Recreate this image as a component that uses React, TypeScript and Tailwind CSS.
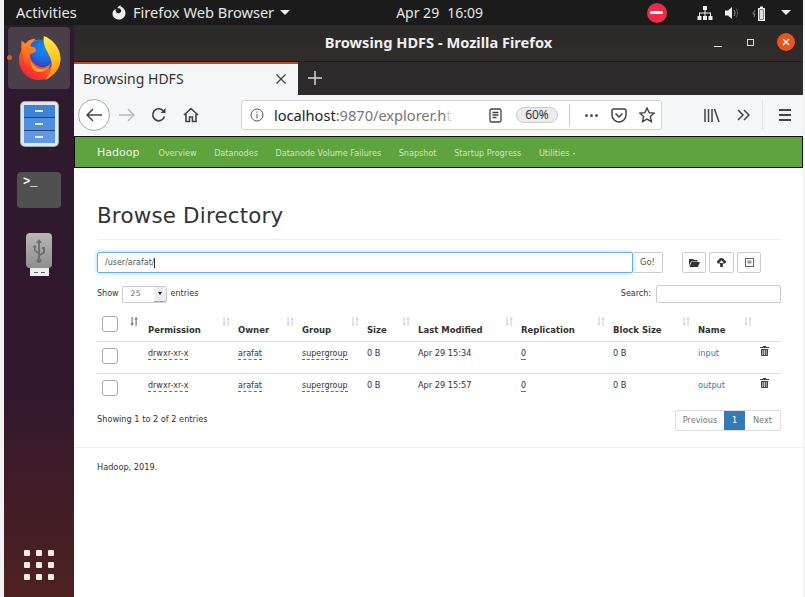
const page = "font-['DejaVu_Sans',sans-serif]";

const SortIcon = ({ active }: { active?: boolean }) => (
  <svg width="9" height="9" viewBox="0 0 9 9" className={active ? "text-[#777]" : "text-[#d4d4d4]"} fill="currentColor">
    <path d="M1.5 0h1.200v6.500H4L2.100 9 .2 6.500h1.300zM5.500 9h1.200V2.500H8L6.100 0 4.200 2.500h1.300z" />
  </svg>
);

const Checkbox = () => <div className="h-[16px] w-[16px] rounded-[3px] border border-[#aaa] bg-white" />;

const Trash = () => (
  <svg width="9" height="10" viewBox="0 0 9 10" fill="#444">
    <path d="M3 0h3l.4 1H9v1H0V1h2.600zM1 3h7v6.200c0 .5-.3.8-.8.8H1.800c-.5 0-.8-.3-.8-.8zm1.500 1v5h.7V4zm1.700 0v5h.7V4zm1.700 0v5h.6V4z" />
  </svg>
);

const Dashed = ({ children }: { children: string }) => (
  <span className="border-b border-dashed border-[#2a7fc0] pb-[1px] text-[8px] leading-none">{children}</span>
);

const colClass =
  "grid grid-cols-[46px_90px_64px_65px_51px_103px_92px_85px_62px_26px]";

const Header = ({ label, active }: { label?: string; active?: boolean }) => (
  <div className={`flex h-[30px] justify-between pl-[5px] ${active ? "pr-[4px]" : "pr-[2px]"}`}>
    {label ? <span className="self-end pb-[7px] text-[8.500px] font-bold leading-none text-[#333]">{label}</span> : <div className="mt-[5px]"><Checkbox /></div>}
    <div className="mt-[6px]">
      <SortIcon active={active} />
    </div>
  </div>
);

const Row = ({ time, name }: { time: string; name: string }) => (
  <div className={`${colClass} h-[32px] border-b border-[#ddd] text-[8.200px] text-[#333] last:border-b-0`}>
    <div className="pl-[5px] pt-[6px]"><Checkbox /></div>
    <div className="pl-[5px] pt-[5px]"><Dashed>drwxr-xr-x</Dashed></div>
    <div className="pl-[5px] pt-[5px]"><Dashed>arafat</Dashed></div>
    <div className="pl-[5px] pt-[5px]"><Dashed>supergroup</Dashed></div>
    <div className="pl-[5px] pt-[5px]">0 B</div>
    <div className="pl-[5px] pt-[5px]">Apr 29 {time}</div>
    <div className="pl-[5px] pt-[5px]"><Dashed>0</Dashed></div>
    <div className="pl-[5px] pt-[5px]">0 B</div>
    <div className="pl-[5px] pt-[5px] text-[#337ab7]">{name}</div>
    <div className="pl-[5px] pt-[4px]"><Trash /></div>
  </div>
);

const Firefox = ({ size }: { size: number }) => (
  <svg width={size} height={size} viewBox="0 0 48 48">
    <defs>
      <linearGradient id="ffa" x1="0.85" y1="0.1" x2="0.2" y2="0.95">
        <stop offset="0" stopColor="#ff9a1f" />
        <stop offset="0.55" stopColor="#ff5a1f" />
        <stop offset="1" stopColor="#f0203a" />
      </linearGradient>
      <linearGradient id="ffy" x1="0.3" y1="0" x2="0.5" y2="1">
        <stop offset="0" stopColor="#ffe94a" />
        <stop offset="0.6" stopColor="#ffc21f" />
        <stop offset="1" stopColor="#ff7a1a" />
      </linearGradient>
      <linearGradient id="fff" x1="0.6" y1="0" x2="0.3" y2="1">
        <stop offset="0" stopColor="#ff9a1f" />
        <stop offset="0.6" stopColor="#ff6a1f" />
        <stop offset="1" stopColor="#f52d2d" />
      </linearGradient>
      <radialGradient id="ffb" cx="0.6" cy="0.3" r="0.7">
        <stop offset="0" stopColor="#0f90f0" />
        <stop offset="0.6" stopColor="#2460d8" />
        <stop offset="1" stopColor="#3a2aa8" />
      </radialGradient>
    </defs>
    <circle cx="24" cy="26" r="21" fill="url(#ffa)" />
    <circle cx="26" cy="21" r="16" fill="url(#ffb)" />
    <path d="M29 1C38 4 46 13 46.500 24 47 34 40 43 30 47 35 42 38 36 37 28 36 20 27 13 29 1z" fill="url(#ffy)" />
    <path d="M6 6l4 3C13 5 17 4 21 4 18 6 15 9 15 12c3 0 6 1.500 6 4 0 3-5 2-6.500 5 0 6 7 13 15 12.500 3-.3 5-2 7-4.500-2 8-10 13-18 10C9 36 4 18 6 6z" fill="url(#fff)" />
    <path d="M15 27c3 6 8 9 14 8.500 3-.3 5-2 6.500-4C33 37 26 40 20 37.500c-2-1-4-5-5-10.500z" fill="#ffab24" />
  </svg>
);

const FilesIcon = () => (
  <div className="flex h-[44px] w-[37px] flex-col gap-[1px] rounded-[4px] border-[3px] border-[#dfe6ee] bg-[#24426e] shadow-[0_0_0_1px_#9aa]">
    {["bg-[#3f83d6]", "bg-[#4f8fe0]", "bg-[#6296e6]"].map((c) => (
      <div key={c} className={`flex flex-1 items-center justify-center ${c}`}>
        <div className="h-[2px] w-[8px] bg-[#e8eef8]" />
      </div>
    ))}
  </div>
);

const TerminalIcon = () => (
  <div className="h-[36px] w-[44px] rounded-[4px] bg-[#505050] pl-[6px] pt-[1px] font-['Liberation_Mono',monospace] text-[12px] font-bold leading-[18px] text-white">
    &gt;_
  </div>
);

const UsbIcon = () => (
  <div className="flex flex-col items-center">
    <div className="flex h-[35px] w-[26px] items-center justify-center rounded-[4px] bg-gradient-to-b from-[#b8b8b8] to-[#8f8f8f]">
      <svg width="14" height="24" viewBox="0 0 14 24" fill="#6f6f6f">
        <path d="M7 0l3 4H8v11l3-2V10H10V8h3v6l-5 3v2.200a2.500 2.500 0 1 1-2 0V15l-4-3V9a1.500 1.500 0 1 1 1.500 0v2.300L6 13V4H4z" />
      </svg>
    </div>
    <div className="flex h-[8px] w-[19px] items-center justify-center gap-[3px] bg-[#eee]">
      <div className="h-[1px] w-[4px] bg-[#666]" />
      <div className="h-[1px] w-[4px] bg-[#666]" />
    </div>
  </div>
);

const Dock = () => (
  <div className="flex w-[70px] shrink-0 flex-col items-center bg-gradient-to-b from-[#2c1a2e] via-[#33182c] via-[65%] to-[#4e211f] pb-[17px] pt-[2px]">
    <div className="relative flex h-[62px] w-[62px] items-center justify-center rounded-[4px] bg-[#4a3f49]">
      <Firefox size={46} />
      <div className="absolute left-[-1px] top-[28px] h-[5px] w-[5px] rounded-full bg-[#e95420]" />
    </div>
    <div className="mt-[13px]"><FilesIcon /></div>
    <div className="mt-[26px]"><TerminalIcon /></div>
    <div className="mt-[25px]"><UsbIcon /></div>
    <div className="mt-auto grid grid-cols-3 gap-[6px]">
      {[0, 1, 2, 3, 4, 5, 6, 7, 8].map((i) => (
        <div key={i} className="h-[6px] w-[6px] rounded-[1px] bg-[#f3ece6]" />
      ))}
    </div>
  </div>
);

const TopBar = () => (
  <div className="flex h-[25px] shrink-0 items-center bg-[#1b1b1b] font-['Noto_Sans',sans-serif] text-[14.600px] text-[#e6e6e6]">
    <span className="ml-[12px] w-[95px]">Activities</span>
    <svg width="16" height="16" viewBox="0 0 16 16" fill="#eee" className="mr-[6px]">
      <path d="M8 1.500c-1 .3-1.500 1-1.500 2 1.500-.5 3 .2 3.500 1.500.6 1.500-.4 3-2 3.200-1.500.2-3-.7-3.300-2.200-.2-.800 0-1.500.3-2.100C2.600 4.800 1.500 6.300 1.500 8.500c0 3.500 2.900 6 6.500 6s6.500-2.800 6.500-6.300c0-3.400-2.700-6-5-6.700.3-.3.4-.6.5-1-1 .1-1.800.3-2.500.5z" />
    </svg>
    <span>Firefox Web Browser</span>
    <div className="ml-[6px] h-0 w-0 border-x-[5px] border-t-[5px] border-x-transparent border-t-[#eee]" />
    <span className="ml-[106px] text-[14px]">Apr 29</span>
    <span className="ml-[8px] text-[14px]">16:09</span>
    <div className="ml-[164px] flex h-[20px] w-[20px] items-center justify-center rounded-full bg-[#ee2a47]">
      <div className="h-[3px] w-[13px] rounded-full bg-white" />
    </div>
    <svg width="16" height="14" viewBox="0 0 16 14" fill="#eee" className="ml-[30px]">
      <path d="M6 0h4v4H8.500v2.500H14V10h1.500v4h-4v-4H13V7.500H8.500V10H10v4H6v-4h1.500V7.500H3V10h1.500v4h-4v-4H2V6.500h5.500V4H6z" />
    </svg>
    <svg width="15" height="14" viewBox="0 0 15 14" className="ml-[12px]">
      <path d="M0 4.500h3L7 1v12L3 9.500H0z" fill="#eee" />
      <path d="M9 4c1.200 1.500 1.200 4.500 0 6" stroke="#999" fill="none" />
      <path d="M11 2.500c2 2.500 2 6.500 0 9" stroke="#666" fill="none" />
    </svg>
    <svg width="16" height="16" viewBox="0 0 16 16" className="ml-[12px]">
      <path d="M3 5L1 9h2l-1 3" stroke="#888" fill="none" />
      <path d="M6 3h2V1.500h3V3h2v13H6z" fill="#eee" />
      <path d="M7.500 4.500h4v10h-4z" fill="#1b1b1b" />
      <path d="M8 5h3v9H8z" fill="#ddd" />
    </svg>
    <div className="ml-[13px] h-0 w-0 border-x-[5px] border-t-[5px] border-x-transparent border-t-[#eee]" />
  </div>
);

const TitleBar = () => (
  <div className="relative flex h-[37px] shrink-0 items-center justify-center border-b border-[#1d1b1a] bg-gradient-to-b from-[#2b2928] to-[#302d2b] font-['Noto_Sans',sans-serif] text-[14.600px] font-bold text-[#f0f0f0]">
    <span>Browsing HDFS - Mozilla Firefox</span>
    <div className="absolute right-[8px] top-[8px] flex items-center">
      <div className="mr-[25px] mt-[8px] h-[1px] w-[8px] bg-[#ddd]" />
      <div className="mr-[23px] h-[7px] w-[7px] border border-[#ddd]" />
      <div className="flex h-[18px] w-[18px] items-center justify-center rounded-full bg-[#e95420]">
        <svg width="8" height="8" viewBox="0 0 8 8" stroke="#fff" strokeWidth="1.300"><path d="M1 1l6 6M7 1L1 7" /></svg>
      </div>
    </div>
  </div>
);

const TabStrip = () => (
  <div className="flex h-[33px] shrink-0 items-stretch bg-[#2c2a2a] font-['Noto_Sans',sans-serif]">
    <div className="flex w-[224px] items-center justify-between border-t-2 border-[#c0492a] bg-[#f5f6f7] pb-[2px] pl-[9px] pr-[12px] text-[14px] text-[#333]">
      <span>Browsing HDFS</span>
      <svg width="10" height="10" viewBox="0 0 10 10" stroke="#444" strokeWidth="1.300"><path d="M.5.5l9 9M9.500.5l-9 9" /></svg>
    </div>
    <div className="flex w-[34px] items-center justify-center pb-[2px]">
      <svg width="14" height="14" viewBox="0 0 14 14" stroke="#ddd" strokeWidth="1.400"><path d="M7 0v14M0 7h14" /></svg>
    </div>
  </div>
);

const Toolbar = () => (
  <div className="flex h-[40px] shrink-0 items-center bg-[#f5f6f7] font-['Noto_Sans',sans-serif]">
    <div className="ml-[4px] flex h-[32px] w-[32px] items-center justify-center rounded-full border border-[#aaa] bg-white">
      <svg width="16" height="14" viewBox="0 0 16 14" fill="none" stroke="#444" strokeWidth="1.500"><path d="M16 7H1M7 1L1 7l6 6" /></svg>
    </div>
    <svg width="16" height="14" viewBox="0 0 16 14" fill="none" stroke="#bbb" strokeWidth="1.500" className="ml-[9px]"><path d="M0 7h15M9 1l6 6-6 6" /></svg>
    <svg width="16" height="16" viewBox="0 0 16 16" fill="none" stroke="#444" strokeWidth="1.700" className="ml-[16px]"><path d="M13.500 9.500A6 6 0 1 1 12 3.500L14 5.500" /><path d="M14.500 1v5h-5" fill="#444" stroke="none" /></svg>
    <svg width="16" height="16" viewBox="0 0 16 16" fill="none" stroke="#444" strokeWidth="1.600" className="ml-[16px]"><path d="M1 8l7-6.500L15 8M3 7v7.500h3.500V10h3v4.500H13V7" /></svg>
    <div className="ml-[42px] flex h-[30px] w-[421px] items-center rounded-[3px] border border-[#d4d4d4] bg-white">
      <svg width="14" height="14" viewBox="0 0 14 14" fill="none" stroke="#555" className="ml-[8px]"><circle cx="7" cy="7" r="6" /><path d="M7 6v4.500M7 3.500v1.300" /></svg>
      <span className="ml-[10px] w-[178px] whitespace-nowrap pt-[2px] text-[14.600px] text-[#222]">
        localhost<span className="text-[#777]">:9870/explorer.h</span><span className="text-[#ccc]">t</span>
      </span>
      <svg width="13" height="15" viewBox="0 0 13 15" fill="none" stroke="#444" strokeWidth="1.300" className="ml-[37px]"><rect x="1" y="1" width="11" height="13" rx="1.500" /><path d="M3.500 4.500h6M3.500 7h6M3.500 9.500h4" /></svg>
      <div className="ml-[14px] flex h-[16px] w-[42px] items-center justify-center rounded-full border border-[#ccc] bg-[#ececec] text-[12px] text-[#333]">60%</div>
      <div className="ml-[11px] h-[22px] w-[1px] bg-[#ccc]" />
      <div className="ml-[15px] flex gap-[2px]">
        <div className="h-[3px] w-[3px] rounded-full bg-[#555]" />
        <div className="h-[3px] w-[3px] rounded-full bg-[#555]" />
        <div className="h-[3px] w-[3px] rounded-full bg-[#555]" />
      </div>
      <svg width="16" height="15" viewBox="0 0 16 15" fill="none" stroke="#444" strokeWidth="1.500" className="ml-[13px]"><path d="M1 2.500C1 1.500 1.600 1 2.500 1h11c.9 0 1.500.5 1.500 1.500V7c0 4-3.500 7-7 7s-7-3-7-7z" /><path d="M4.500 5.500L8 9l3.500-3.500" /></svg>
      <svg width="16" height="16" viewBox="0 0 16 16" fill="none" stroke="#444" strokeWidth="1.400" className="ml-[12px]"><path d="M8 1l2.100 4.600 5 .6-3.700 3.400 1 5L8 12.100 3.600 14.600l1-5L.9 6.200l5-.6z" /></svg>
    </div>
    <svg width="16" height="15" viewBox="0 0 16 15" fill="none" stroke="#444" strokeWidth="1.500" className="ml-[42px]"><path d="M1 1v13M4.500 1v13M8 1v13M10.500 1l4.500 13" /></svg>
    <svg width="13" height="12" viewBox="0 0 13 12" fill="none" stroke="#444" strokeWidth="1.500" className="ml-[17px]"><path d="M1 1l5 5-5 5M7 1l5 5-5 5" /></svg>
    <div className="ml-[12px] h-[30px] w-[1px] bg-[#e2e2e2]" />
    <div className="ml-[16px] flex w-[12px] flex-col gap-[3px]">
      <div className="h-[2px] bg-[#444]" />
      <div className="h-[2px] bg-[#444]" />
      <div className="h-[2px] bg-[#444]" />
    </div>
  </div>
);

const NavBar = () => (
  <div className={`mt-[1px] flex h-[32px] shrink-0 items-center border border-[#111] bg-[#5fa33e] pl-[22px] pt-[3px] text-[8.100px] text-[#cfe6c2] ${page}`}>
    <span className="mr-[19px] text-[11px] text-[#eef6ea]">Hadoop</span>
    <span className="mr-[17.600px]">Overview</span>
    <span className="mr-[17.600px]">Datanodes</span>
    <span className="mr-[17.600px]">Datanode Volume Failures</span>
    <span className="mr-[17.600px]">Snapshot</span>
    <span className="mr-[17.600px]">Startup Progress</span>
    <span>Utilities</span>
    <div className="ml-[4px] mt-[1px] h-0 w-0 border-x-[1.500px] border-t-[2px] border-x-transparent border-t-[#cfe6c2]" />
  </div>
);

const IconButton = ({ children, width }: { children: React.ReactNode; width: string }) => (
  <div className={`flex h-[21px] items-center justify-center rounded-[2px] border border-[#ccc] bg-white ${width}`}>{children}</div>
);

const Browser = () => (
  <div className={`flex flex-1 flex-col bg-white px-[23px] text-[#333] ${page}`}>
    <h1 className="mt-[35px] border-b border-[#eee] pb-[10px] text-[21.400px] font-medium leading-[26px] tracking-[0.2px] text-[#333]">Browse Directory</h1>
    <div className="mt-[12px] flex w-[684px] items-center">
      <div className="flex h-[21px] w-[536px] items-center rounded-[2px] border border-[#66afe9] pl-[7px] text-[8px] text-[#555] shadow-[0_0_4px_rgba(102,175,233,0.6)]">
        /user/arafat/<span className="h-[10px] w-[1px] bg-[#333]" />
      </div>
      <div className="flex h-[21px] w-[30px] items-center justify-center rounded-r-[2px] border border-l-0 border-[#ccc] text-[8.400px] text-[#555]">Go!</div>
      <div className="ml-[19px] flex gap-[3px]">
        <IconButton width="w-[24px]">
          <svg width="11" height="9" viewBox="0 0 11 9" fill="#333"><path d="M0 1h4l1 1h3.500v1.500H2L0 8zM2.500 4H11L8.800 9H.5z" /></svg>
        </IconButton>
        <IconButton width="w-[25px]">
          <svg width="9" height="9" viewBox="0 0 10 10" fill="#333"><path d="M5 0C6.800 0 8 1 8.300 2.600 9.300 2.800 10 3.600 10 4.500 10 5.500 9.300 6 8.500 6H6.500v4h-3V6h-2C.7 6 0 5.500 0 4.500c0-1 .8-1.800 1.700-1.900C2 1 3.200 0 5 0z" /><path d="M5 2.500L2.500 5.500h5z" fill="#fff" /></svg>
        </IconButton>
        <IconButton width="w-[24px]">
          <svg width="9" height="9" viewBox="0 0 9 9" fill="none" stroke="#666"><rect x="0.500" y="0.500" width="8" height="8" /><rect x="2.500" y="2.500" width="4" height="3" fill="#999" stroke="none" /></svg>
        </IconButton>
      </div>
    </div>
    <div className="mt-[12px] flex w-[684px] items-center justify-between text-[8px]">
      <div className="flex items-center">
        Show
        <div className="ml-[3px] flex h-[17px] w-[45px] items-stretch justify-between rounded-[2px] border border-[#ccc] pl-[8px] text-[7.500px] tracking-[0.5px] text-[#666]">
          <span className="self-center">25</span>
          <div className="flex w-[12px] items-center justify-center rounded-r-[2px] border-b border-[#aaa] bg-[#eee]">
            <div className="h-0 w-0 border-x-[2.500px] border-t-[3px] border-x-transparent border-t-[#222]" />
          </div>
        </div>
        <span className="ml-[4px]">entries</span>
      </div>
      <div className="flex items-center">
        Search:
        <div className="ml-[5px] h-[18px] w-[125px] rounded-[2px] border border-[#ccc]" />
      </div>
    </div>
    <div className="mt-[8px] w-[684px]">
      <div className={`${colClass} border-b border-[#ddd]`}>
        <Header active />
        <Header label="Permission" />
        <Header label="Owner" />
        <Header label="Group" />
        <Header label="Size" />
        <Header label="Last Modified" />
        <Header label="Replication" />
        <Header label="Block Size" />
        <Header label="Name" />
        <div />
      </div>
      <Row time="15:34" name="input" />
      <Row time="15:57" name="output" />
    </div>
    <div className="mt-[4px] flex w-[684px] items-center justify-between text-[8.200px]">
      <span className="pb-[2px]">Showing 1 to 2 of 2 entries</span>
      <div className="flex h-[21px] items-stretch rounded-[2px] border border-[#ddd] text-[#777]">
        <span className="flex w-[48px] items-center justify-center">Previous</span>
        <span className="flex w-[21px] items-center justify-center bg-[#337ab7] text-white">1</span>
        <span className="flex w-[35px] items-center justify-center">Next</span>
      </div>
    </div>
    <div className="mx-[-23px] mt-[16px] border-t border-[#eee] pl-[23px] pt-[13px] text-[8.200px] text-[#333]">Hadoop, 2019.</div>
  </div>
);

export default function App() {
  return (
    <div className="flex h-[597px] w-[805px] flex-col overflow-hidden bg-[#f2f2f2] pl-[4px] pr-[2px]">
      <TopBar />
      <div className="flex min-h-0 flex-1">
        <Dock />
        <div className="flex min-w-0 flex-1 flex-col bg-white">
          <TitleBar />
          <TabStrip />
          <Toolbar />
          <NavBar />
          <Browser />
        </div>
      </div>
    </div>
  );
}
